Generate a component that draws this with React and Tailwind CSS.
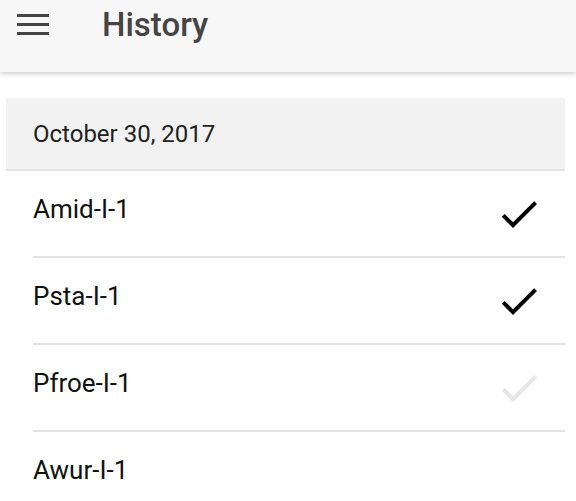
const ROWS = [
  { name: 'Amid-I-1', done: 'yes' },
  { name: 'Psta-I-1', done: 'yes' },
  { name: 'Pfroe-I-1', done: 'faint' },
  { name: 'Awur-I-1', done: 'none' },
]

function Check({ faint }) {
  return (
    <svg viewBox="0 0 24 24" className="h-12 w-12" fill={faint ? '#e6e6e6' : '#000'}>
      <path d="M9 16.17L4.83 12l-1.42 1.41L9 19 21 7l-1.41-1.41z" />
    </svg>
  )
}

export default function App() {
  return (
    <div className="h-[501px] w-[576px] overflow-hidden bg-white font-['Roboto',sans-serif]">
      {/* App bar */}
      <header className="relative z-10 flex h-[72px] items-start bg-[#f7f7f7] shadow-[0_2px_5px_rgba(0,0,0,0.2)]">
        <div className="ml-[17px] mt-[14px] flex w-[32px] flex-col gap-[6px]">
          <span className="h-[3px] bg-[#444]" />
          <span className="h-[3px] bg-[#444]" />
          <span className="h-[3px] bg-[#444]" />
        </div>
        <h1 className="ml-[53px] mt-[8px] text-[33px] font-medium leading-none text-[#444]">History</h1>
      </header>

      {/* History card */}
      <section className="ml-[6px] mt-[26px] w-[559px] bg-white">
        <div className="flex h-[73px] items-center border-b-2 border-[#e2e2e2] bg-[#f2f2f2] pl-[27px]">
          <span className="text-[24px] text-[#222]">October 30, 2017</span>
        </div>
        {ROWS.map((row) => (
          <div key={row.name} className="ml-[27px] flex h-[87px] items-center justify-between border-b-2 border-[#e2e2e2]">
            <span className="mb-[8px] text-[26px] text-[#111]">{row.name}</span>
            {row.done !== 'none' && (
              <div className="mr-[22px]">
                <Check faint={row.done === 'faint'} />
              </div>
            )}
          </div>
        ))}
      </section>
    </div>
  )
}
